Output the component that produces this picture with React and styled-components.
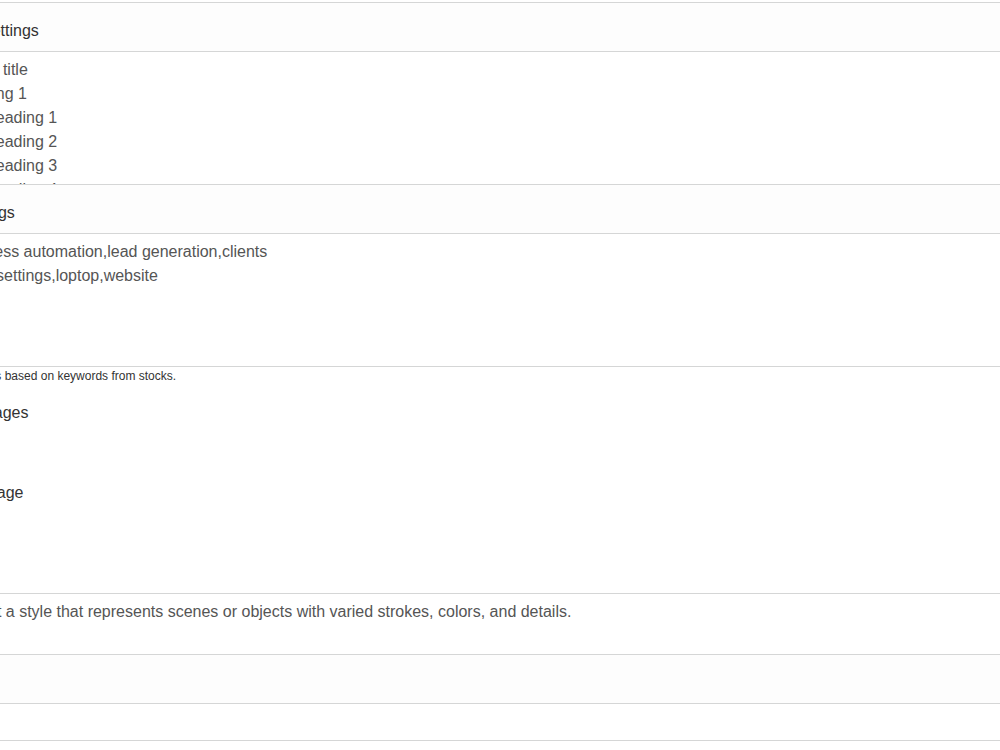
import React from 'react';
import styled, { createGlobalStyle } from 'styled-components';

const GlobalStyle = createGlobalStyle`
	html, body {
		margin: 0;
		background: #fff;
		overflow: hidden;
	}
	body {
		font-family: "Liberation Sans", Arial, sans-serif;
		color: #333;
	}
`

// page is scrolled sideways, so its left part lies outside the window
const Page = styled.div`
	width: 1120px;
	margin-left: -60px;
	padding-top: 2px;
`

const Panel = styled.section`
	border-top: 1px solid #d5d6d6;
	border-bottom: 1px solid #d5d6d6;

	& + & {
		border-top: none;
	}
`

const PanelHeader = styled.div`
	height: 49px;
	display: flex;
	align-items: center;
	padding: 8px 0 0 41px;
	box-sizing: border-box;
	background: #fdfdfd;
	border-bottom: 1px solid #d5d6d6;
	font-size: 16px;
	color: #333;
`

const PanelBody = styled.div`
	height: 132px;
	overflow: hidden;
	padding: 6px 0 0 14px;
	box-sizing: border-box;
	background: #fff;
`

const OutlineList = styled.ul`
	list-style: none;
	margin: 0;
	padding: 0;

	& > li {
		font-size: 16px;
		line-height: 24px;
		color: #555;
	}
`

const Keywords = styled.div`
	font-size: 16px;
	line-height: 24px;
	color: #555;
	padding-left: 2px;
`

const Hint = styled.p`
	margin: 0;
	padding: 1px 0 0 22px;
	font-size: 12px;
	line-height: 16px;
	color: #333;
`

const Options = styled.div`
	display: flex;
	flex-direction: column;
	gap: 56px;
	padding-top: 17px;
	height: 209px;
	box-sizing: border-box;
`

const Option = styled.label`
	font-size: 16px;
	line-height: 24px;
	color: #333;
	padding-left: ${p => p.offset}px;
`

const StyleNote = styled.div`
	border-top: 1px solid #d5d6d6;
	height: 61px;
	padding: 6px 0 0 8px;
	box-sizing: border-box;
	font-size: 16px;
	line-height: 24px;
	color: #555;
`

const Row = styled.div`
	border-top: 1px solid #d5d6d6;
	height: ${p => p.h}px;
	background: ${p => p.tint ? '#fdfdfd' : '#fff'};

	&:last-child {
		border-bottom: 1px solid #d5d6d6;
	}
`

const outline = ['Article title', 'Heading 1', 'Sub heading 1', 'Sub heading 2', 'Sub heading 3', 'Sub heading 4', 'Sub heading 5'];

export default function App() {
	return (
		<>
			<GlobalStyle />
			<Page>
				<Panel>
					<PanelHeader>Settings</PanelHeader>
					<PanelBody>
						<OutlineList>
							{outline.map((item) => (
								<li key={item}>{item}</li>
							))}
						</OutlineList>
					</PanelBody>
				</Panel>
				<Panel>
					<PanelHeader>Tags</PanelHeader>
					<PanelBody>
						<Keywords>business automation,lead generation,clients</Keywords>
						<Keywords>page settings,loptop,website</Keywords>
					</PanelBody>
				</Panel>
				<Hint>Images based on keywords from stocks.</Hint>
				<Options>
					<Option offset={36}>Images</Option>
					<Option offset={39}>Image</Option>
				</Options>
				<StyleNote>Line art a style that represents scenes or objects with varied strokes, colors, and details.</StyleNote>
				<Row h={48} tint />
				<Row h={36} />
			</Page>
		</>
	);
}
